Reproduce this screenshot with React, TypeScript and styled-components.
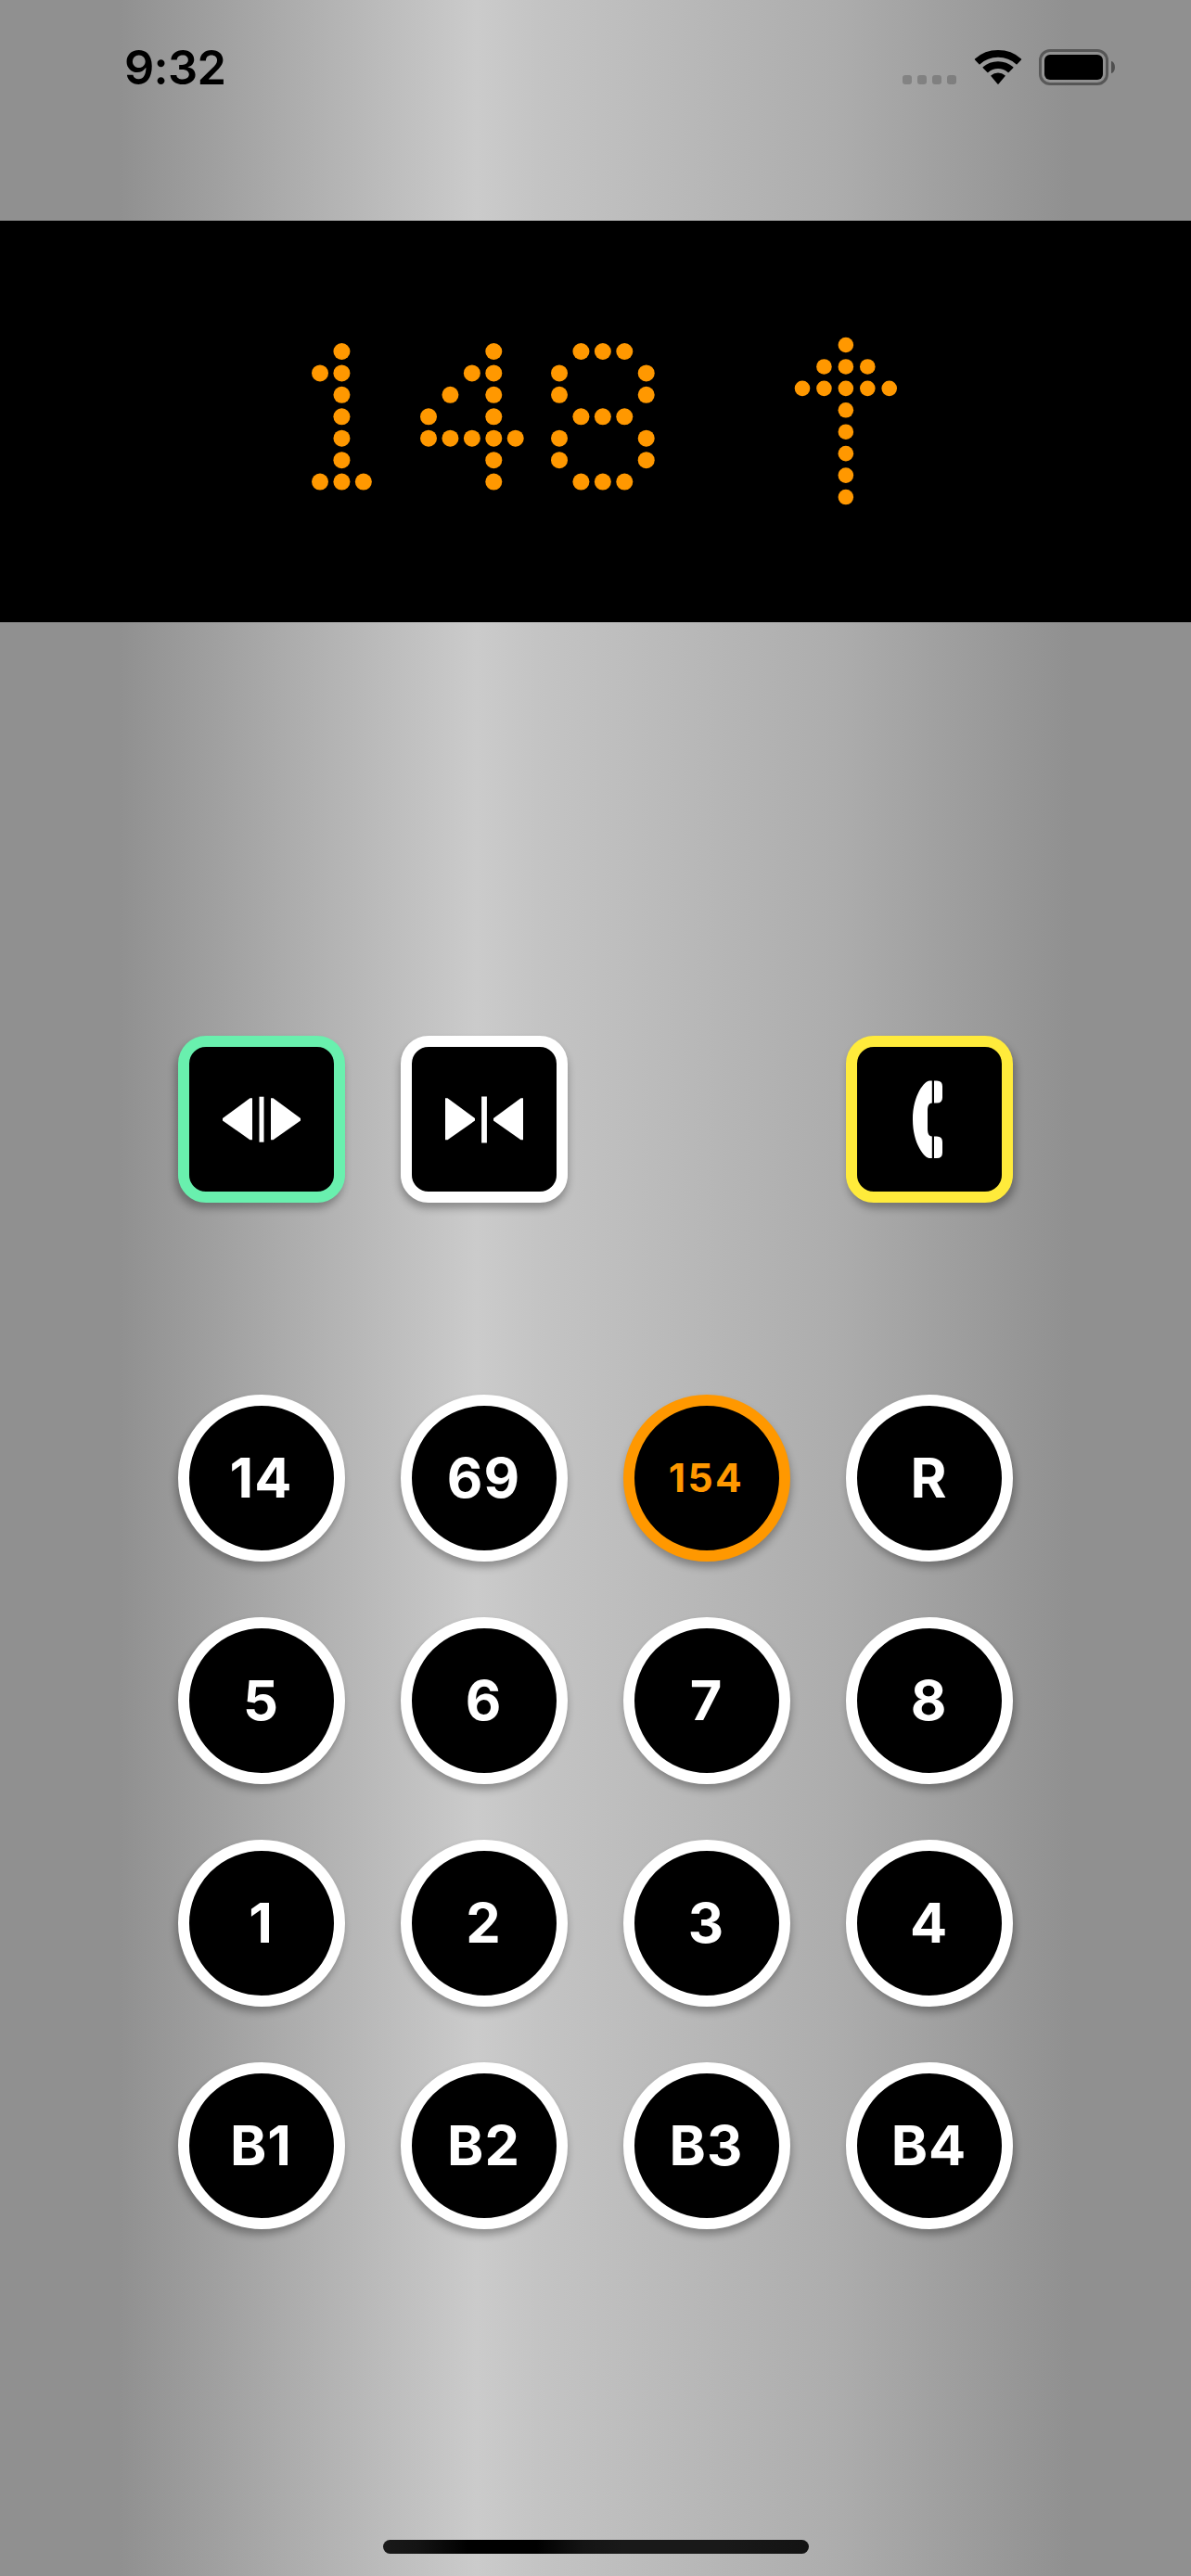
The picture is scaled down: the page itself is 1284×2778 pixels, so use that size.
import React from "react";
import styled, { createGlobalStyle } from "styled-components";

const ORANGE = "#ff9800";
const PITCH = 23.43;

const GlobalStyle = createGlobalStyle`
  *, *::before, *::after { box-sizing: border-box; }
  body { margin: 0; }
`;

const Screen = styled.main`
  display: flex;
  flex-direction: column;
  align-items: center;
  width: 1284px;
  height: 2778px;
  overflow: hidden;
  font-family: Inter, "Liberation Sans", sans-serif;
  background: linear-gradient(
    90deg,
    #909090 0%,
    #909090 10%,
    #cbcbcb 40%,
    #c4c4c4 45%,
    #b9b9b9 57%,
    #adadad 70%,
    #909090 90%,
    #909090 100%
  );
`;

const StatusBar = styled.header`
  display: flex;
  justify-content: space-between;
  width: 100%;
  height: 237.5px;
  flex: none;
  padding: 53px 82px 0 134px;
`;

const Clock = styled.time`
  height: 39px;
  font-size: 50.5px;
  font-weight: 600;
  line-height: 39px;
  letter-spacing: -0.7px;
  color: #000;
`;

const StatusIcons = styled.div`
  display: flex;
  align-items: flex-end;
  height: 39px;
`;

const Signal = styled.div`
  display: flex;
  gap: 6px;
  margin: 0 19px 1px 0;
`;

const SignalDot = styled.span`
  width: 10px;
  height: 10px;
  border-radius: 3px;
  background: rgba(0, 0, 0, 0.2);
`;

const WifiIcon = styled.svg`
  width: 52px;
  height: 39px;
  margin-right: 18px;
`;

const Battery = styled.div`
  width: 75px;
  height: 39px;
  padding: 3px;
  border: 3px solid rgba(0, 0, 0, 0.4);
  border-radius: 12px;
`;

const BatteryLevel = styled.div`
  height: 27px;
  border-radius: 6px;
  background: #000;
`;

const BatteryCap = styled.span`
  align-self: center;
  width: 4px;
  height: 13px;
  margin-left: 3px;
  border-radius: 0 4px 4px 0 / 0 6.5px 6.5px 0;
  background: rgba(0, 0, 0, 0.45);
`;

const Display = styled.section`
  display: flex;
  justify-content: center;
  align-items: center;
  gap: 150.2px;
  width: 100%;
  height: 433.5px;
  flex: none;
  padding: 0 0 0 20px;
  background: #000;
`;

const Digits = styled.div`
  display: flex;
  gap: 29px;
  margin-bottom: 10px;
`;

const DotArt = styled.svg`
  display: block;
  flex: none;
  fill: ${ORANGE};
`;

const Panel = styled.section`
  display: flex;
  flex-direction: column;
  gap: 207.5px;
  margin-top: 445.5px;
`;

const ButtonGrid = styled.div`
  display: grid;
  grid-template-columns: repeat(4, 180px);
  gap: 60px;
`;

interface KeyProps {
  $color?: string;
  $column: number;
}

const Key = styled.button<KeyProps>`
  display: flex;
  align-items: center;
  justify-content: center;
  grid-column: ${(p) => p.$column};
  width: 180px;
  height: 180px;
  padding: 0;
  border: 12px solid ${(p) => p.$color ?? "#fff"};
  background: #000;
  color: #fff;
  box-shadow: ${(p) => (p.$column - 2.5) * 1.6}px 6px 9px rgba(0, 0, 0, 0.3);
`;

const SquareKey = styled(Key)`
  border-radius: 30px;
`;

const FloorKey = styled(Key)<{ $small: boolean; $lit: boolean }>`
  padding-right: 1px;
  border-radius: 50%;
  font-family: inherit;
  font-size: ${(p) => (p.$small ? 42.5 : 59.5)}px;
  font-weight: ${(p) => (p.$small ? 700 : 740)};
  letter-spacing: ${(p) => (p.$small ? 2.4 : 1)}px;
  line-height: 1;
  color: ${(p) => (p.$lit ? ORANGE : "#fff")};
`;

const KeyIcon = styled.svg`
  display: block;
  width: 156px;
  height: 156px;
  fill: #fff;
`;

const HomeIndicator = styled.div`
  width: 459px;
  height: 15px;
  flex: none;
  margin: auto 0 24px;
  border-radius: 8px;
  background: linear-gradient(90deg, #191919 0%, #141414 8%, #000 20%, #000 36%, #141414 47%, #191919 56%, #191919 80%, #131313 100%);
`;

const GLYPHS: Record<string, string[]> = {
  "1": [".#.", "##.", ".#.", ".#.", ".#.", ".#.", "###"],
  "4": ["...#.", "..##.", ".#.#.", "#..#.", "#####", "...#.", "...#."],
  "8": [".###.", "#...#", "#...#", ".###.", "#...#", "#...#", ".###."],
  up: ["..#..", ".###.", "#####", "..#..", "..#..", "..#..", "..#..", "..#.."],
};

function DotGlyph({ name, radius, trail = 0 }: { name: string; radius: number; trail?: number }) {
  const rows = GLYPHS[name];
  const width = (rows[0].length - 1 + trail) * PITCH + 18;
  const height = (rows.length - 1) * PITCH + 18;
  return (
    <DotArt width={width} height={height} aria-hidden="true">
      {rows.flatMap((row, y) =>
        [...row].map((cell, x) =>
          cell === "#" ? (
            <circle key={`${x}-${y}`} cx={x * PITCH + 9} cy={y * PITCH + 9} r={radius} />
          ) : null
        )
      )}
    </DotArt>
  );
}

function Wifi() {
  return (
    <WifiIcon viewBox="0 0 52 39" aria-hidden="true">
      <path d="M1 11.5 Q0.5 11 1 10.4 Q11.5 1 26 1 Q40.500 1 51 10.400 Q51.500 11 51 11.500 L46.500 16.200 Q46 16.600 45.500 16.200 Q37.500 8.700 26 8.700 Q14.500 8.700 6.500 16.200 Q6 16.600 5.500 16.200 Z" />
      <path d="M9.700 20.300 Q9.200 19.800 9.700 19.300 Q16.500 13.300 26 13.300 Q35.500 13.300 42.300 19.300 Q42.800 19.800 42.300 20.300 L37.600 25 Q37.100 25.400 36.600 25 Q32.200 21 26 21 Q19.800 21 15.400 25 Q14.900 25.400 14.400 25 Z" />
      <path d="M18.500 29.200 Q18 28.700 18.500 28.200 Q21.600 25.600 26 25.600 Q30.400 25.600 33.500 28.200 Q34 28.700 33.500 29.200 L26.600 37.400 Q26 38 25.400 37.400 Z" />
    </WifiIcon>
  );
}

const OpenIcon = () => (
  <KeyIcon viewBox="0 0 156 156" aria-hidden="true">
    <path d="M36 77 L65.500 55.200 H68 V100.300 H65.500 L36 79.500 Z" />
    <rect x="75.500" y="53.700" width="5" height="49" />
    <path d="M88 55.200 H90.500 L120 77 V79.500 L90.500 100.300 H88 Z" />
  </KeyIcon>
);

const CloseIcon = () => (
  <KeyIcon viewBox="0 0 156 156" aria-hidden="true">
    <path d="M36 55.200 H38.500 L68 77 V79.500 L38.500 100.300 H36 Z" />
    <rect x="75.100" y="53.500" width="5.800" height="50" />
    <path d="M88 77 L117.500 55.200 H120 V100.300 H117.500 L88 79.500 Z" />
  </KeyIcon>
);

const PhoneIcon = () => (
  <KeyIcon viewBox="0 0 156 156" aria-hidden="true">
    <path d="M80.800 36.500 V60.500 C77 60.500 76 64.500 76 69 V88 C76 92.500 77 96.500 80.800 96.500 V120 H78 C73 120 60 105 60 78.300 C60 51.500 73 36.500 78 36.500 Z" />
    <path d="M83 36.500 H86 Q92 36.500 92 42.500 V54.500 Q92 60.500 86 60.500 H83 Z" />
    <path d="M83 96.500 H86 Q92 96.500 92 102.500 V114 Q92 120 86 120 H83 Z" />
  </KeyIcon>
);

const FLOORS = ["14", "69", "154", "R", "5", "6", "7", "8", "1", "2", "3", "4", "B1", "B2", "B3", "B4"];

export default function App() {
  const selected = "154";
  return (
    <>
      <GlobalStyle />
      <Screen>
        <StatusBar>
          <Clock>9:32</Clock>
          <StatusIcons>
            <Signal>
              {[0, 1, 2, 3].map((i) => (
                <SignalDot key={i} />
              ))}
            </Signal>
            <Wifi />
            <Battery>
              <BatteryLevel />
            </Battery>
            <BatteryCap />
          </StatusIcons>
        </StatusBar>

        <Display role="img" aria-label="148 up">
          <Digits>
            <DotGlyph name="1" radius={9} trail={1} />
            <DotGlyph name="4" radius={9} />
            <DotGlyph name="8" radius={9} />
          </Digits>
          <DotGlyph name="up" radius={8.3} />
        </Display>

        <Panel>
          <ButtonGrid>
            <SquareKey $column={1} $color="#69f0ae" aria-label="Open doors">
              <OpenIcon />
            </SquareKey>
            <SquareKey $column={2} aria-label="Close doors">
              <CloseIcon />
            </SquareKey>
            <SquareKey $column={4} $color="#ffeb3b" aria-label="Emergency call">
              <PhoneIcon />
            </SquareKey>
          </ButtonGrid>
          <ButtonGrid>
            {FLOORS.map((floor, i) => (
              <FloorKey
                key={floor}
                $column={(i % 4) + 1}
                $small={floor.length > 2}
                $lit={floor === selected}
                $color={floor === selected ? ORANGE : undefined}
              >
                {floor}
              </FloorKey>
            ))}
          </ButtonGrid>
        </Panel>
        <HomeIndicator />
      </Screen>
    </>
  );
}
